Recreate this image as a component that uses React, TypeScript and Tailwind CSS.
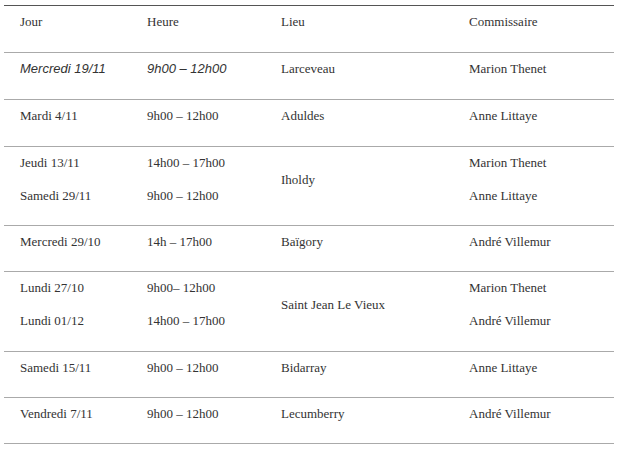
const rows: { jour: string[]; heure: string[]; lieu: string; com: string[]; italic?: boolean; tall?: boolean }[] = [
  { jour: ["Mercredi 19/11"], heure: ["9h00 – 12h00"], lieu: "Larceveau", com: ["Marion Thenet"], italic: true, tall: true },
  { jour: ["Mardi 4/11"], heure: ["9h00 – 12h00"], lieu: "Aduldes", com: ["Anne Littaye"], tall: true },
  { jour: ["Jeudi 13/11", "Samedi 29/11"], heure: ["14h00 – 17h00", "9h00 – 12h00"], lieu: "Iholdy", com: ["Marion Thenet", "Anne Littaye"] },
  { jour: ["Mercredi 29/10"], heure: ["14h – 17h00"], lieu: "Baïgory", com: ["André Villemur"] },
  { jour: ["Lundi 27/10", "Lundi 01/12"], heure: ["9h00– 12h00", "14h00 – 17h00"], lieu: "Saint Jean Le Vieux", com: ["Marion Thenet", "André Villemur"], tall: true },
  { jour: ["Samedi 15/11"], heure: ["9h00 – 12h00"], lieu: "Bidarray", com: ["Anne Littaye"] },
  { jour: ["Vendredi 7/11"], heure: ["9h00 – 12h00"], lieu: "Lecumberry", com: ["André Villemur"] },
];

const Cell = ({ lines, italic, tall }: { lines: string[]; italic?: boolean; tall?: boolean }) => (
  <td className={tall ? "pl-4 pt-[6px] pb-[7px] align-middle" : "pl-4 pt-[6px] pb-[6px] align-middle"}>
    {lines.map((l, i) => (
      <p
        key={i}
        className={
          italic
            ? "italic mb-[13px] leading-5 font-[Liberation_Sans,Arial,sans-serif]"
            : "mb-[13px] leading-5 font-[Liberation_Serif,Times_New_Roman,serif]"
        }
      >
        {l}
      </p>
    ))}
  </td>
);

const App = () => {
  return (
    <div className="bg-white w-[622px] h-[449px] pt-[5px] pl-[4px] text-[13px] text-[#333]">
      <table className="w-[610px] border-collapse table-fixed">
        <colgroup>
          <col className="w-[127px]" />
          <col className="w-[134px]" />
          <col className="w-[188px]" />
          <col className="w-[161px]" />
        </colgroup>
        <thead>
          <tr className="border-t border-t-[#555] border-b border-b-[#aaa]">
            <Cell lines={["Jour"]} tall />
            <Cell lines={["Heure"]} tall />
            <Cell lines={["Lieu"]} tall />
            <Cell lines={["Commissaire"]} tall />
          </tr>
        </thead>
        <tbody>
          {rows.map((r, i) => (
            <tr key={i} className="border-b border-b-[#aaa]">
              <Cell lines={r.jour} italic={r.italic} tall={r.tall} />
              <Cell lines={r.heure} italic={r.italic} tall={r.tall} />
              <Cell lines={[r.lieu]} tall={r.tall} />
              <Cell lines={r.com} tall={r.tall} />
            </tr>
          ))}
        </tbody>
      </table>
    </div>
  );
};

export default App;
